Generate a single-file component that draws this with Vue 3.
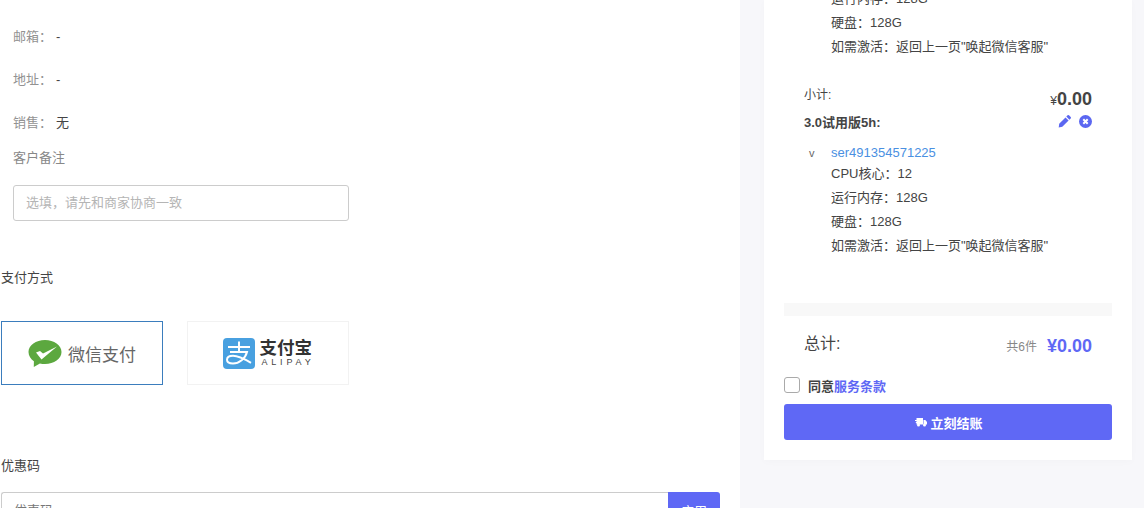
<template>
  <div class="page">
    <div class="main">
      <div class="info-list">
        <div v-for="row in infoRows" :key="row.label" class="info-row">
          <span class="info-label">{{ row.label }}：</span>
          <span class="info-value">{{ row.value }}</span>
        </div>
      </div>

      <div class="remark">
        <div class="remark-title">客户备注</div>
        <input class="remark-input" type="text" placeholder="选填，请先和商家协商一致">
      </div>

      <div class="section-title pay-title">支付方式</div>
      <div class="pay-methods">
        <div class="pay-tile active">
          <svg class="wechat-icon" width="34" height="29" viewBox="0 0 34 29">
            <path d="M17 1C8 1 .5 6.400 .5 13c0 3.800 2.300 7.100 5.400 9.300L5.800 28l6.100-3.600c1.600.4 3.300.6 5.100.6 9 0 16.500-5.400 16.500-12S26 1 17 1z" fill="#5ca83f" />
            <path d="M8 13.500l4-1.500 3 2.500L29 7.500 13.500 20.500z" fill="#fff" />
          </svg>
          <span class="wechat-text">微信支付</span>
        </div>
        <div class="pay-tile alipay">
          <svg class="alipay-icon" width="32" height="31" viewBox="0 0 32 31">
            <rect width="32" height="31" rx="4" fill="#48a0e0" />
            <path d="M5 9h22M16 3.500V14M7 14h17c-1.600 6.500-8 11.500-14 11.500-4 0-6-1.600-6-3.700 0-2.500 2.500-4 6-4 5.500 0 12 3.500 18 7" fill="none" stroke="#fff" stroke-width="2" />
          </svg>
          <div class="alipay-text">
            <div class="alipay-cn">支付宝</div>
            <div class="alipay-en">ALIPAY</div>
          </div>
        </div>
      </div>

      <div class="section-title coupon-title">优惠码</div>
      <div class="coupon">
        <input class="coupon-input" type="text" placeholder="优惠码">
        <button class="coupon-btn">应用</button>
      </div>
    </div>

    <div class="side">
      <div class="card">
        <div class="item-specs first">
          <div>运行内存：128G</div>
          <div>硬盘：128G</div>
          <div>如需激活：返回上一页"唤起微信客服"</div>
        </div>

        <div class="subtotal">
          <span class="subtotal-label">小计:</span>
          <span class="subtotal-price"><small>¥</small>0.00</span>
        </div>
        <div class="product">
          <span class="product-name">3.0试用版5h:</span>
          <span class="product-actions">
            <svg width="14" height="14" viewBox="0 0 14 14">
              <path d="M9.600 1.300a1 1 0 0 1 1.400 0l1.700 1.700a1 1 0 0 1 0 1.400l-1.300 1.300-3.100-3.100zM7.500 3.400l3.100 3.100-6.300 6.300-3.600.6.500-3.700z" fill="#5b67f1" />
            </svg>
            <svg width="13" height="13" viewBox="0 0 13 13">
              <circle cx="6.500" cy="6.500" r="6.500" fill="#5b67f1" />
              <path d="M4.300 4.300l4.400 4.400M8.700 4.300l-4.400 4.400" stroke="#fff" stroke-width="2" />
            </svg>
          </span>
        </div>
        <div class="server">
          <span class="server-toggle">v</span>
          <a class="server-link">ser491354571225</a>
        </div>
        <div class="item-specs">
          <div>CPU核心：12</div>
          <div>运行内存：128G</div>
          <div>硬盘：128G</div>
          <div>如需激活：返回上一页"唤起微信客服"</div>
        </div>

        <div class="divider"></div>

        <div class="total">
          <span class="total-label">总计:</span>
          <span class="total-count">共6件</span>
          <span class="total-price">¥0.00</span>
        </div>

        <label class="agree">
          <span class="checkbox"></span>
          <span>同意<a class="terms">服务条款</a></span>
        </label>

        <button class="checkout">
          <svg width="14" height="10" viewBox="0 0 14 10">
            <path d="M3.500 1h6.500v6.500H3.500zM10.500 3h1.800L14 5v2.500h-3.500zM2 3h2v1H2zM2.800 5h2v1h-2z" fill="#fff" />
            <circle cx="5.500" cy="8" r="1.500" fill="#fff" />
            <circle cx="11.500" cy="8" r="1.500" fill="#fff" />
          </svg>
          立刻结账
        </button>
      </div>
    </div>
  </div>
</template>

<script setup>
const infoRows = [
  { label: '邮箱', value: '-' },
  { label: '地址', value: '-' },
  { label: '销售', value: '无' }
]
</script>

<style>
html, body {
  margin: 0;
  height: 508px;
  overflow: hidden;
  background: #fff;
}
</style>

<style scoped>
.page {
  display: flex;
  width: 1144px;
  height: 508px;
  overflow: hidden;
  font-family: "Liberation Sans", "Noto Sans CJK SC", sans-serif;
  font-size: 13px;
  color: #444;
}
.main {
  width: 740px;
  flex-shrink: 0;
  background: #fff;
  padding: 0 20px 0 1px;
  box-sizing: border-box;
}
.info-list {
  padding: 15px 0 0 12px;
}
.info-row {
  height: 43px;
  line-height: 43px;
  display: flex;
}
.info-label {
  width: 43px;
  color: #929292;
}
.info-value {
  color: #444;
}
.remark {
  padding-left: 12px;
}
.remark-title {
  margin-top: 3px;
  line-height: 22px;
  color: #888;
}
.remark-input {
  display: block;
  margin-top: 16px;
  width: 336px;
  height: 36px;
  box-sizing: border-box;
  padding: 0 12px 2px;
  border: 1px solid #ccc;
  border-radius: 3px;
  font: inherit;
  outline: none;
}
.remark-input::placeholder {
  color: #b5b5b5;
}
.coupon-input::placeholder {
  color: #777;
}
.section-title {
  line-height: 22px;
  color: #444;
}
.pay-title {
  margin-top: 46px;
}
.pay-methods {
  display: flex;
  gap: 24px;
  margin-top: 32px;
}
.pay-tile {
  width: 162px;
  height: 64px;
  box-sizing: border-box;
  border: 1px solid #f2f2f2;
  display: flex;
  align-items: center;
  justify-content: center;
  gap: 5px;
}
.pay-tile.active {
  border-color: #3b7dbd;
  gap: 6px;
}
.pay-tile.alipay {
  padding-left: 1px;
}
.wechat-text {
  font-size: 17px;
  color: #666;
}
.alipay-text {
  line-height: 1;
}
.alipay-cn {
  font-size: 17.500px;
  line-height: 18px;
  font-weight: bold;
  color: #333;
}
.alipay-en {
  font-size: 9px;
  line-height: 10px;
  letter-spacing: 3.800px;
  white-space: nowrap;
  padding-left: 2px;
  color: #444;
}
.coupon-title {
  margin-top: 70px;
}
.coupon {
  display: flex;
  margin-top: 15px;
  height: 36px;
}
.coupon-input {
  flex: 1;
  min-width: 0;
  box-sizing: border-box;
  padding: 0 12px;
  border: 1px solid #ccc;
  border-right: none;
  border-radius: 3px 0 0 3px;
  font: inherit;
  outline: none;
}
.coupon-btn {
  width: 52px;
  border: none;
  border-radius: 0 3px 3px 0;
  background: #5f68f5;
  color: #fff;
  font: inherit;
}
.side {
  flex: 1;
  background: #f7f7fa;
  padding: 0 12px 0 24px;
  height: 508px;
}
.card {
  height: 460px;
  box-sizing: border-box;
  background: #fff;
  padding: 0 20px;
  box-shadow: 0 2px 8px rgba(0, 0, 0, 0.02);
  display: flex;
  flex-direction: column;
  overflow: hidden;
}
.item-specs {
  padding-left: 47px;
  line-height: 24px;
  color: #444;
}
.item-specs.first {
  margin-top: -13px;
}
.subtotal {
  display: flex;
  justify-content: space-between;
  margin-top: 25px;
  padding: 0 20px;
  height: 27px;
}
.subtotal-label {
  font-size: 12px;
  line-height: 22px;
  color: #444;
}
.subtotal-price {
  font-size: 18px;
  font-weight: bold;
  line-height: 30px;
  color: #444;
}
.subtotal-price small {
  font-size: 12px;
  font-weight: normal;
}
.product {
  display: flex;
  justify-content: space-between;
  align-items: center;
  padding: 0 20px;
  height: 22px;
  margin-top: -1px;
}
.product-name {
  font-weight: bold;
  color: #444;
}
.product-actions {
  display: flex;
  align-items: center;
  gap: 7px;
}
.server {
  display: flex;
  height: 24px;
  line-height: 24px;
  margin-top: 9px;
  padding-left: 25px;
}
.server-toggle {
  width: 22px;
  font-size: 11px;
  color: #666;
}
.server-link {
  color: #4a90e2;
}
.server + .item-specs {
  margin-top: -3px;
}
.divider {
  height: 13px;
  background: #f8f8f8;
  margin-top: 45px;
  flex-shrink: 0;
}
.total {
  display: flex;
  align-items: center;
  margin-top: 16px;
  padding: 0 20px;
  height: 26px;
}
.total-label {
  font-size: 16px;
  color: #444;
  flex: 1;
  margin-bottom: 6px;
}
.total-count {
  font-size: 12px;
  color: #888;
  margin-right: 10px;
}
.total-price {
  font-size: 18px;
  font-weight: bold;
  color: #5f68f5;
  margin-top: 2px;
}
.agree {
  display: flex;
  align-items: center;
  gap: 8px;
  margin-top: 18px;
  height: 18px;
  font-weight: bold;
  color: #444;
}
.checkbox {
  width: 16px;
  height: 16px;
  box-sizing: border-box;
  border: 1px solid #aaa;
  border-radius: 3px;
  background: #fff;
}
.terms {
  color: #5f68f5;
}
.checkout {
  display: flex;
  align-items: center;
  justify-content: center;
  gap: 3px;
  height: 36px;
  margin-top: 10px;
  flex-shrink: 0;
  border: none;
  border-radius: 3px;
  background: #5f68f5;
  color: #fff;
  font: inherit;
  font-weight: bold;
}
</style>
